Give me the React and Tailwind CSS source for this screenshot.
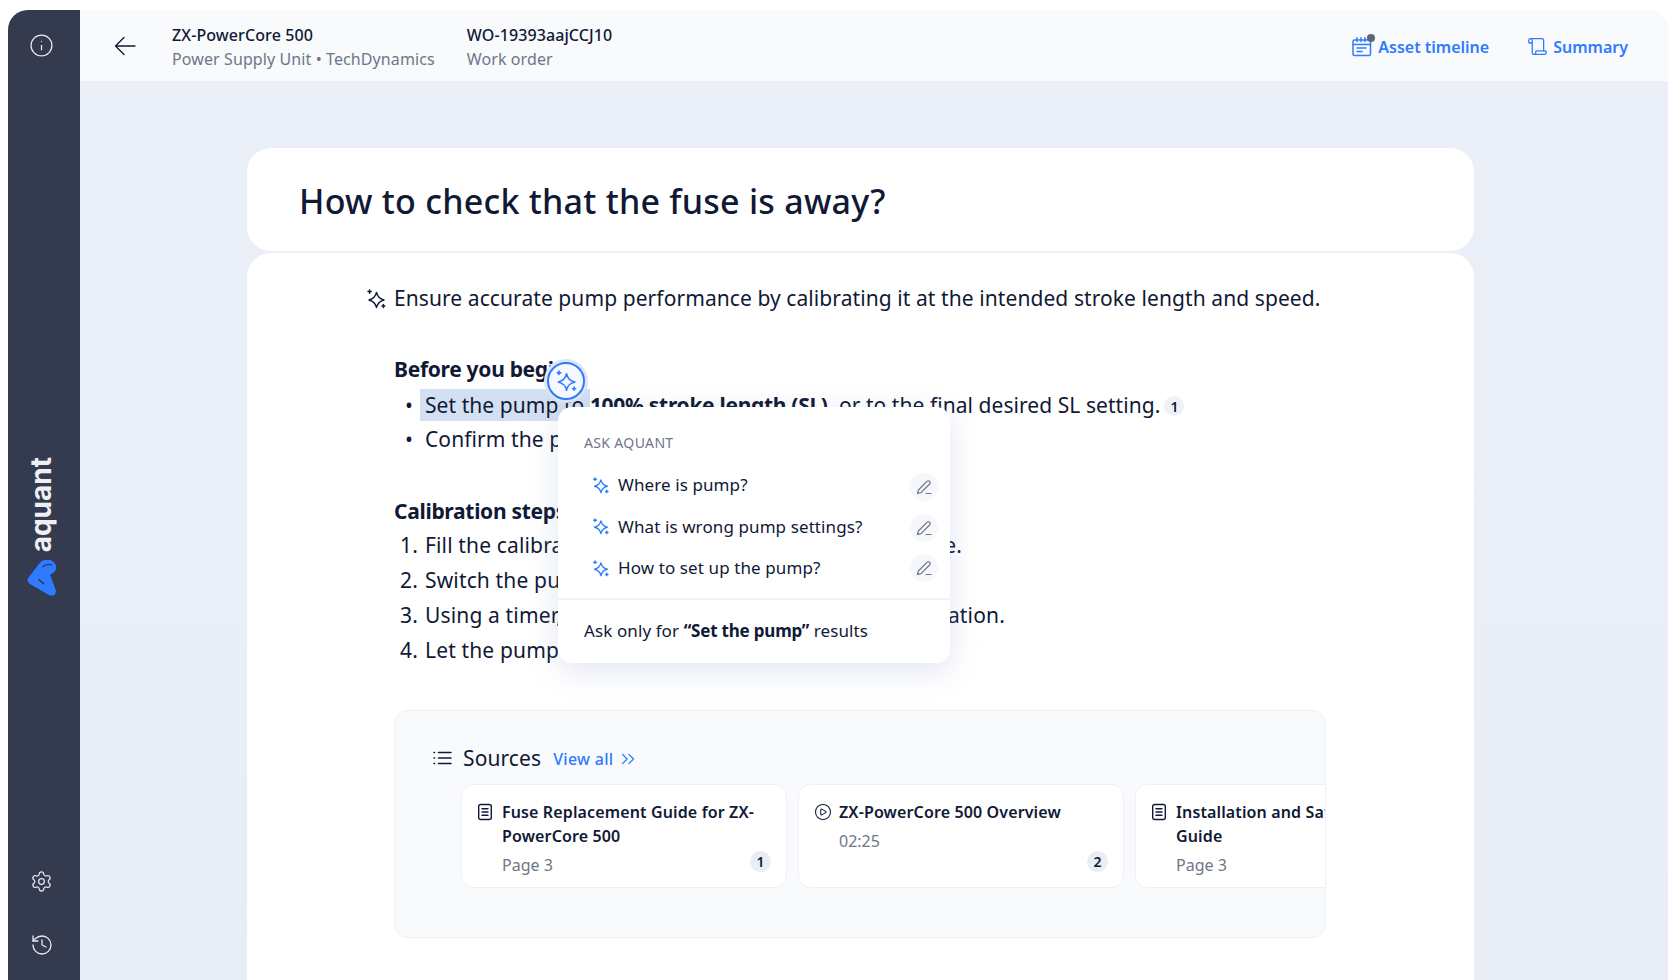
import React from "react";
import { Info, Settings, History, ChevronsRight, CirclePlay, Scroll } from "lucide-react";

const Sparkle = ({ className = "", size = 20, sw = 1.6 }) => (
  <svg width={size} height={size} viewBox="0 0 20 20" fill="none" stroke="currentColor" strokeWidth={sw} strokeLinejoin="round" strokeLinecap="round" className={className}>
    <path d="M10.5 3.4C11.4 7.6 13 9.6 18 10.9C13 12.2 11.4 14.2 10.5 18.4C9.6 14.2 8 12.2 3 10.9C8 9.6 9.6 7.6 10.5 3.4Z" />
    <path d="M3.6 1V4.2M2 2.6H5.2M17.4 15.6V18.4M16 17H18.8" />
  </svg>
);

const Doc = () => (
  <svg width="16" height="18" viewBox="0 0 16 18" fill="none" stroke="#101935" strokeWidth="1.4" strokeLinecap="round" className="shrink-0 mt-[3px]">
    <rect x="1.7" y="1.5" width="12.6" height="15" rx="2" />
    <path d="M5 5.7H11M5 9H11M5 12.3H11" />
  </svg>
);

const Pencil = () => (
  <svg width="18" height="18" viewBox="0 0 18 18" fill="none" stroke="#6f7688" strokeWidth="1.2" strokeLinecap="round" strokeLinejoin="round">
    <path d="M2.5 15.5L3.4 12L12 3.4C12.8 2.6 14 2.6 14.7 3.3C15.4 4 15.4 5.2 14.6 6L6 14.6L2.5 15.5Z" />
    <path d="M11 15.5H16" />
  </svg>
);

const Calendar = () => (
  <span className="relative w-[20px] h-[20px] shrink-0">
    <svg width="20" height="20" viewBox="0 0 20 20" fill="none" stroke="#2e7bff" strokeWidth="1.5" strokeLinecap="round">
      <rect x="1" y="3" width="17.5" height="15.5" rx="1.5" />
      <path d="M1 7.5H18.5M5 0.8V4.5M9 0.8V4.5M13 0.8V4.5M5 11H14M5 14.5H10" />
    </svg>
    <span className="absolute -top-[3px] -right-[3px] w-[8px] h-[8px] rounded-full bg-[#5d6478]" />
  </span>
);

const Logo = () => (
  <svg width="30" height="38" viewBox="80 358 90 114" className="shrink-0 mt-[7px]">
    <path d="M118 370C130 356 160 356 167 378C170 392 160 402 149 405L166 450C170 466 156 472 146 466L90 434C80 428 79 420 86 412Z" fill="#2e7bff" />
    <path d="M128 381C136 374 146 373 154 376" stroke="#343b4f" strokeWidth="4" fill="none" strokeLinecap="round" />
    <path d="M116 420L130 432" stroke="#343b4f" strokeWidth="5" fill="none" strokeLinecap="round" />
  </svg>
);

const Ask = ({ children, shift = "" }) => (
  <div className="flex items-center h-[28px] pl-[34px] pr-[12px]">
    <Sparkle size={17} className="text-[#2e7bff] mr-[9px] shrink-0" />
    <span className="flex-1 text-[17px] tracking-[0.1px] text-[#101935]">{children}</span>
    <span className={`w-[28px] h-[28px] rounded-full bg-[#f6f7fa] flex items-center justify-center ${shift}`}><Pencil /></span>
  </div>
);

const SourceCard = ({ icon, title, sub, badge, gap = "gap-[9px]" }) => (
  <div className={`relative w-[326px] h-[104px] shrink-0 bg-white rounded-[12px] border border-[#edf0f8] pl-[15px] pt-[15px] flex ${gap}`}>
    {icon}
    <div className="w-[270px]">
      <div className="text-[16px] leading-[24px] font-semibold tracking-[0.13px] text-[#101935]">{title}</div>
      <div className="mt-[5px] text-[16px] leading-[24px] text-[#6f7688]">{sub}</div>
    </div>
    {badge && <span className="absolute right-[15px] bottom-[15px] w-[21px] h-[21px] rounded-full bg-[#e9edf7] text-[14px] font-semibold text-[#101935] flex items-center justify-center">{badge}</span>}
  </div>
);

export default function App() {
  return (
    <div className="h-[980px] w-[1676px] overflow-hidden bg-white pl-[8px] pr-[8px] pt-[10px] text-[#101935]" style={{ fontFamily: '"Noto Sans", sans-serif' }}>
      <div className="flex h-[970px] rounded-t-[20px] overflow-hidden bg-gradient-to-b from-[#ebeff7] to-[#e9edf6]">
        <aside className="w-[72px] shrink-0 bg-[#343b4f] flex flex-col items-center pr-[5px] text-[#e8eaf0]">
          <Info size={25} strokeWidth={1.2} className="mt-[23px]" />
          <div className="flex-1 flex flex-col items-center justify-center mt-[126px]">
            <span className="text-[28px] leading-[32px] font-bold text-[#eef0f4] [writing-mode:vertical-rl] rotate-180 -translate-x-[1px]" style={{ fontFamily: 'Inter, sans-serif' }}>aquant</span>
            <Logo />
          </div>
          <Settings size={23} strokeWidth={1.3} className="mb-[40px]" />
          <History size={24} strokeWidth={1.3} className="mb-[23px]" />
        </aside>
        <div className="flex-1 flex flex-col min-w-0">
          <header className="h-[71px] shrink-0 bg-[#f8fafc] flex items-center pl-[34px] pr-[40px]">
            <svg width="22" height="22" viewBox="0 0 22 22" fill="none" stroke="#101935" strokeWidth="1.3" strokeLinecap="round" strokeLinejoin="round"><path d="M21 11H1.5M10 2.5L1.5 11L10 19.5" /></svg>
            <div className="ml-[36px] mt-[2px]">
              <div className="text-[16px] leading-[24px] font-medium tracking-[0.1px]">ZX-PowerCore 500</div>
              <div className="text-[16px] leading-[24px] text-[#6f7688] tracking-[0.1px]">Power Supply Unit • TechDynamics</div>
            </div>
            <div className="ml-[32px] mt-[2px]">
              <div className="text-[16px] leading-[24px] font-medium tracking-[0.1px]">WO-19393aajCCJ10</div>
              <div className="text-[16px] leading-[24px] text-[#6f7688] tracking-[0.1px]">Work order</div>
            </div>
            <div className="ml-auto flex items-center text-[#2e7bff] text-[16px] font-semibold mt-[2px]">
              <Calendar />
              <span className="ml-[6px]">Asset timeline</span>
              <Scroll size={21} strokeWidth={1.5} className="ml-[38px]" />
              <span className="ml-[5px]">Summary</span>
            </div>
          </header>
          <main className="flex-1 min-h-0 pl-[167px] pr-[194px] pt-[67px] overflow-hidden">
            <div className="h-[103px] bg-white rounded-[24px] flex items-center pl-[52px]">
              <h1 className="text-[34px] font-medium leading-[44px] tracking-[0.25px] mt-[2px]">How to check that the fuse is away?</h1>
            </div>
            <div className="relative mt-[2px] h-[800px] bg-white rounded-t-[24px] px-[147px] pt-[29px]">
              <div className="flex items-center h-[34px] text-[21px] tracking-[0.08px]">
                <Sparkle size={20} sw={1.5} className="-ml-[28px] mr-[8px] shrink-0" />
                <span>Ensure accurate pump performance by calibrating it at the intended stroke length and speed.</span>
              </div>
              <div className="mt-[36px] h-[34px] leading-[34px] text-[21px] font-bold tracking-[-0.3px]">Before you begin</div>
              <div className="mt-[3px] h-[34px] flex items-center text-[21px] tracking-[0.06px]">
                <span className="w-[31px] pl-[11px]">•</span>
                <span><span className="bg-[#d3dff2] py-[2px] -ml-[5px] pl-[5px]">Set the pump to </span><b className="font-bold tracking-[-0.3px]">100% stroke length (SL)</b>, or to the final desired SL setting.</span>
                <span className="ml-[4px] w-[20px] h-[20px] rounded-full bg-[#eef1f8] text-[14px] font-semibold flex items-center justify-center">1</span>
              </div>
              <div className="h-[34px] flex items-center text-[21px] tracking-[0.08px]">
                <span className="w-[31px] pl-[11px]">•</span>
                <span>Confirm the pump is running</span>
              </div>
              <div className="mt-[37px] h-[34px] leading-[34px] text-[21px] font-bold tracking-[-0.3px]">Calibration steps</div>
              <ol className="text-[21px] leading-[35px] tracking-[0.15px]">
                <li className="flex"><span className="w-[31px] pl-[6px]">1.</span>Fill the calibration column to the desired level of tube.</li>
                <li className="flex"><span className="w-[31px] pl-[6px]">2.</span>Switch the pump on and let it run steadily.</li>
                <li className="flex"><span className="w-[31px] pl-[6px]">3.</span>Using a timer, time the drawdown through the calibration.</li>
                <li className="flex"><span className="w-[31px] pl-[6px]">4.</span>Let the pump stop and note the result.</li>
              </ol>
              <section className="mt-[42px] mr-[1px] h-[228px] bg-[#f8fafc] border border-[#edf0f8] rounded-[14px] overflow-hidden pl-[38px] pt-[31px]">
                <div className="flex items-center h-[32px]">
                  <svg width="19" height="14" viewBox="0 0 19 14" fill="none" stroke="#101935" strokeWidth="1.5" strokeLinecap="round"><path d="M5.5 1.5H18M5.5 7H18M5.5 12.5H18M1 1.5H1.6M1 7H1.6M1 12.5H1.6" /></svg>
                  <span className="ml-[11px] text-[21px] tracking-[0.1px] mt-[1px]">Sources</span>
                  <span className="ml-[12px] mt-[2px] text-[16px] font-medium tracking-[0.3px] text-[#2e7bff]">View all</span>
                  <ChevronsRight size={22} strokeWidth={1.4} className="ml-[4px] mt-[2px] text-[#2e7bff]" />
                </div>
                <div className="ml-[28px] mt-[10px] flex gap-[11px]">
                  <SourceCard icon={<Doc />} title={<>Fuse Replacement Guide for ZX-<br />PowerCore 500</>} sub="Page 3" badge="1" />
                  <SourceCard icon={<CirclePlay size={18} strokeWidth={1.4} className="shrink-0 mt-[3px]" />} gap="gap-[7px]" title="ZX-PowerCore 500 Overview" sub="02:25" badge="2" />
                  <SourceCard icon={<Doc />} title={<>Installation and Safety<br />Guide</>} sub="Page 3" />
                </div>
              </section>
              <div className="absolute left-[311px] top-[154px] w-[392px] h-[256px] bg-white rounded-[14px] shadow-[0_8px_30px_rgba(120,140,190,0.22)] flex flex-col">
                <div className="pl-[26px] pt-[26px] h-[64px] text-[14px] leading-[20px] tracking-[0.35px] text-[#6f7688]">ASK AQUANT</div>
                <div className="flex flex-col gap-[13.5px]">
                  <Ask shift="translate-y-[2px]">Where is pump?</Ask>
                  <Ask shift="translate-y-[1px]">What is wrong pump settings?</Ask>
                  <Ask>How to set up the pump?</Ask>
                </div>
                <div className="mt-[16px] border-t-2 border-[#f0f3f9] pl-[26px] pt-[19px] text-[17px] leading-[24px] tracking-[0.1px]">Ask only for <b className="font-bold tracking-[-0.2px]">“Set the pump”</b> results</div>
              </div>
              <button className="absolute left-[300px] top-[109px] w-[38px] h-[38px] rounded-full bg-[#f5f8fe] border-2 border-[#2e7bff] shadow-[0_0_0_3px_#dde5f5] flex items-center justify-center text-[#2e7bff]">
                <Sparkle size={22} sw={1.5} />
              </button>
            </div>
          </main>
        </div>
      </div>
    </div>
  );
}
